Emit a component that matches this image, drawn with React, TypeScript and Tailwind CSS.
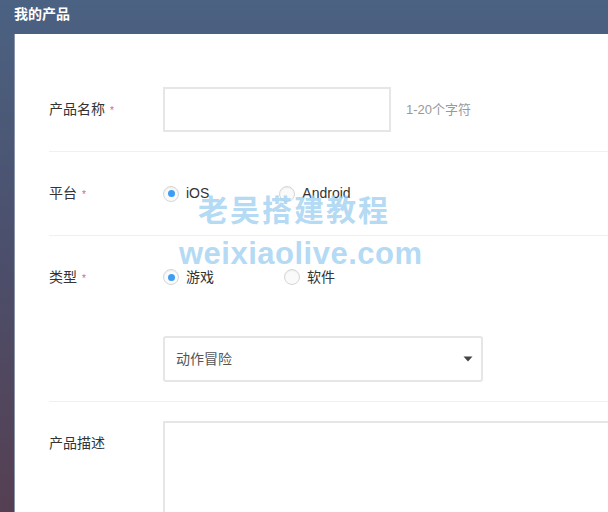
import React, { useState } from 'react';

const font = "font-['Liberation_Sans','Noto_Sans_CJK_SC',sans-serif]";

function Required() {
  return <span className="ml-[5px] text-[10px] text-[#e0607a] relative top-[1px]">*</span>;
}

function Radio({ checked, label, onClick }: { checked: boolean; label: string; onClick: () => void }) {
  return (
    <button onClick={onClick} className="flex items-center mr-[70px]">
      <span className="w-4 h-4 rounded-full border border-[#d6d6d6] bg-[#fafafa] shadow-[inset_0_1px_1px_rgba(0,0,0,0.06)] flex items-center justify-center">
        {checked && <span className="w-[7px] h-[7px] rounded-full bg-[#3d9df2]" />}
      </span>
      <span className="ml-[7px] text-[14px] text-[#333]">{label}</span>
    </button>
  );
}

export default function App() {
  const [platform, setPlatform] = useState('ios');
  const [kind, setKind] = useState('game');

  return (
    <div className={`${font} w-[608px] h-[512px] overflow-hidden bg-gradient-to-b from-[#4b6283] via-[#4b4f6b] to-[#553f52] flex flex-col`}>
      <div className="shrink-0 h-[34px] pl-[14px] pb-[6px] flex items-center text-[14px] font-semibold text-white">我的产品</div>

      <div className="relative flex-1 min-h-0 ml-[14px] bg-white pl-[34px] border-l border-[#8a93a8]">
        {/* 产品名称 */}
        <div className="flex items-center pt-[53px] pb-[19px] border-b border-[#f0f0f0]">
          <div className="w-[114px] text-[14px] text-[#333] flex items-center">产品名称<Required /></div>
          <input className="w-[228px] h-[45px] border-2 border-[#e6e6e6] outline-none px-3 text-[14px]" />
          <span className="ml-[15px] text-[13px] text-[#999]">1-20个字符</span>
        </div>

        {/* 平台 */}
        <div className="flex items-center h-[84px] border-b border-[#f0f0f0]">
          <div className="w-[114px] text-[14px] text-[#333] flex items-center">平台<Required /></div>
          <Radio checked={platform === 'ios'} label="iOS" onClick={() => setPlatform('ios')} />
          <Radio checked={platform === 'android'} label="Android" onClick={() => setPlatform('android')} />
        </div>

        {/* 类型 */}
        <div className="pt-[31px] pb-[19px] border-b border-[#f0f0f0]">
          <div className="flex items-center h-[20px]">
            <div className="w-[114px] text-[14px] text-[#333] flex items-center">类型<Required /></div>
            <Radio checked={kind === 'game'} label="游戏" onClick={() => setKind('game')} />
            <Radio checked={kind === 'soft'} label="软件" onClick={() => setKind('soft')} />
          </div>
          <div className="ml-[114px] mt-[49px] w-[320px] h-[46px] border-2 border-[#e6e6e6] rounded-[3px] flex items-center justify-between pl-[11px] pr-[8px]">
            <span className="text-[14px] text-[#555]">动作冒险</span>
            <svg width="10" height="6" viewBox="0 0 10 6"><path d="M0.5 0.5h9L5 5.5z" fill="#444" /></svg>
          </div>
        </div>

        {/* 产品描述 */}
        <div className="flex items-start pt-[19px]">
          <div className="w-[114px] pt-[12px] text-[14px] text-[#333]">产品描述</div>
          <textarea className="flex-1 h-[120px] border-2 border-[#e6e6e6] border-r-0 outline-none resize-none" />
        </div>

        {/* watermark */}
        <div className="absolute left-[182px] top-[162px] pointer-events-none select-none flex flex-col items-start">
          <span className="text-[30px] font-bold leading-none tracking-[2px] text-[#9fd0f2]/80 ml-[1px]">老吴搭建教程</span>
          <span className="mt-[12px] text-[31px] font-bold leading-none tracking-[0.5px] text-[#9fd0f2]/80 -ml-[18px]">weixiaolive.com</span>
        </div>
      </div>
    </div>
  );
}
